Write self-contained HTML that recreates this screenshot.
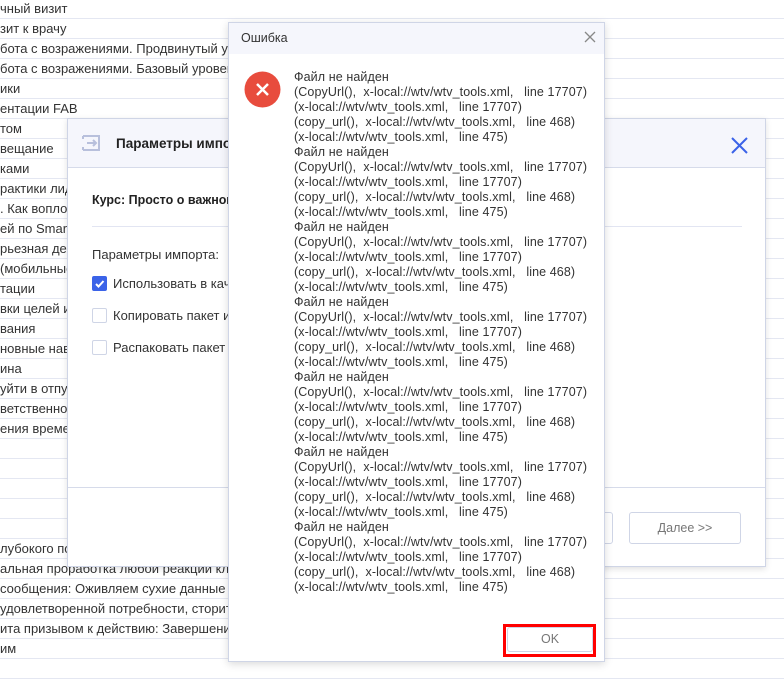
<!DOCTYPE html>
<html><head><meta charset="utf-8"><style>
*{box-sizing:border-box;margin:0;padding:0}
body{width:784px;height:678px;overflow:hidden;background:#fff;font-family:"Liberation Sans",sans-serif;color:#333;position:relative}
.row{position:absolute;left:0;width:784px;height:20px;border-bottom:1px solid #e4e7f2;font-size:13px;line-height:19px;padding-left:0;white-space:nowrap;overflow:hidden}
.imp{position:absolute;left:67px;top:118px;width:699px;height:449px;background:#fff;border:1px solid #cfd5e6;box-shadow:0 2px 6px rgba(0,0,0,.12)}
.imp .hd{height:49px;background:#f5f6fc;border-bottom:1px solid #d6dbea;position:relative}
.err{position:absolute;left:228px;top:22px;width:377px;height:640px;background:#fff;border:1px solid #cfd5e6;box-shadow:0 2px 8px rgba(0,0,0,.15)}
.err .hd{height:31px;background:#f5f6fc;font-size:12.5px;line-height:31px;padding-left:12px;color:#333}
.msg{position:absolute;left:65px;top:47px;font-size:12.5px;letter-spacing:0.1px;line-height:15px;color:#333;white-space:pre}
.cb{position:absolute;left:24px;width:15px;height:15px;border:1px solid #cfd5e6;border-radius:2px;background:#fff}
.lbl{position:absolute;left:45px;font-size:13px;color:#333;white-space:nowrap}
.btn{position:absolute;border:1px solid #cfd5e6;border-radius:3px;background:#fff;color:#777;font-size:12.5px;text-align:center}
</style></head><body>
<div class="row" style="top:-1px">чный визит</div>
<div class="row" style="top:19px">зит к врачу</div>
<div class="row" style="top:39px">бота с возражениями. Продвинутый уровень</div>
<div class="row" style="top:59px">бота с возражениями. Базовый уровень</div>
<div class="row" style="top:79px">ики</div>
<div class="row" style="top:99px">ентации FAB</div>
<div class="row" style="top:119px">том</div>
<div class="row" style="top:139px">вещание</div>
<div class="row" style="top:159px">ками</div>
<div class="row" style="top:179px">рактики лидеров</div>
<div class="row" style="top:199px">. Как воплотить</div>
<div class="row" style="top:219px">ей по Smart</div>
<div class="row" style="top:239px">рьезная деятельность</div>
<div class="row" style="top:259px"> (мобильные</div>
<div class="row" style="top:279px">тации</div>
<div class="row" style="top:299px">вки целей и</div>
<div class="row" style="top:319px">вания</div>
<div class="row" style="top:339px">новные навыки</div>
<div class="row" style="top:359px">ина</div>
<div class="row" style="top:379px">уйти в отпуск</div>
<div class="row" style="top:399px">ветственность</div>
<div class="row" style="top:419px">ения времени</div>
<div class="row" style="top:439px"></div>
<div class="row" style="top:459px"></div>
<div class="row" style="top:479px"></div>
<div class="row" style="top:499px"></div>
<div class="row" style="top:519px"></div>
<div class="row" style="top:539px">лубокого понимания</div>
<div class="row" style="top:559px">альная проработка любой реакции клиента</div>
<div class="row" style="top:579px"> сообщения: Оживляем сухие данные</div>
<div class="row" style="top:599px">удовлетворенной потребности, сторителлинг</div>
<div class="row" style="top:619px">ита призывом к действию: Завершение</div>
<div class="row" style="top:639px">им</div>
<div class="row" style="top:659px"></div>

<div class="imp">
 <div class="hd">
  <svg style="position:absolute;left:14px;top:16px" width="18" height="16" viewBox="0 0 18 16"><path d="M1 1h16v14H1M1 1v3M1 12v3M5 8h9M11 5l3 3-3 3" fill="none" stroke="#b8c0dc" stroke-width="2"/></svg>
  <div style="position:absolute;left:48px;top:17px;font-size:13.5px;font-weight:bold;color:#222">Параметры импорта</div>
  <svg style="position:absolute;left:663px;top:18px" width="17" height="17" viewBox="0 0 17 17"><path d="M1 1L16 16M16 1L1 16" stroke="#3b63e8" stroke-width="2"/></svg>
 </div>
 <div style="position:absolute;left:24px;top:74px;font-size:12.5px;font-weight:bold;color:#222">Курс: Просто о важном</div>
 <div style="position:absolute;left:24px;top:107px;width:650px;height:1px;background:#e2e5f2"></div>
 <div style="position:absolute;left:24px;top:128px;font-size:13px;color:#333">Параметры импорта:</div>
 <div class="cb" style="top:157px;background:#3b63e8;border-color:#3b63e8"><svg width="13" height="13" viewBox="0 0 13 13" style="position:absolute;left:0;top:0"><path d="M3 7l2.5 2.5L10.5 4" fill="none" stroke="#fff" stroke-width="2"/></svg></div>
 <div class="lbl" style="top:157px">Использовать в качестве</div>
 <div class="cb" style="top:189px"></div>
 <div class="lbl" style="top:189px">Копировать пакет из</div>
 <div class="cb" style="top:221px"></div>
 <div class="lbl" style="top:221px">Распаковать пакет</div>
 <div style="position:absolute;left:0;top:368px;width:697px;height:1px;background:#d6dbea"></div>
 <div class="btn" style="left:480px;top:393px;width:65px;height:32px"></div>
 <div class="btn" style="left:561px;top:393px;width:112px;height:32px;line-height:30px">Далее &gt;&gt;</div>
</div>

<div class="err">
 <div class="hd">Ошибка</div>
 <svg style="position:absolute;left:355px;top:8px" width="12" height="12" viewBox="0 0 12 12"><path d="M1 1L11 11M11 1L1 11" stroke="#888" stroke-width="1.3"/></svg>
 <svg style="position:absolute;left:15px;top:48px" width="37" height="37" viewBox="0 0 37 37"><circle cx="18.5" cy="18.5" r="18" fill="#e84c3d"/><path d="M13 13L24 24M24 13L13 24" stroke="#fff" stroke-width="2.5"/></svg>
 <div class="msg">Файл не найден
(CopyUrl(),  x-local://wtv/wtv_tools.xml,   line 17707)
(x-local://wtv/wtv_tools.xml,   line 17707)
(copy_url(),  x-local://wtv/wtv_tools.xml,   line 468)
(x-local://wtv/wtv_tools.xml,   line 475)
Файл не найден
(CopyUrl(),  x-local://wtv/wtv_tools.xml,   line 17707)
(x-local://wtv/wtv_tools.xml,   line 17707)
(copy_url(),  x-local://wtv/wtv_tools.xml,   line 468)
(x-local://wtv/wtv_tools.xml,   line 475)
Файл не найден
(CopyUrl(),  x-local://wtv/wtv_tools.xml,   line 17707)
(x-local://wtv/wtv_tools.xml,   line 17707)
(copy_url(),  x-local://wtv/wtv_tools.xml,   line 468)
(x-local://wtv/wtv_tools.xml,   line 475)
Файл не найден
(CopyUrl(),  x-local://wtv/wtv_tools.xml,   line 17707)
(x-local://wtv/wtv_tools.xml,   line 17707)
(copy_url(),  x-local://wtv/wtv_tools.xml,   line 468)
(x-local://wtv/wtv_tools.xml,   line 475)
Файл не найден
(CopyUrl(),  x-local://wtv/wtv_tools.xml,   line 17707)
(x-local://wtv/wtv_tools.xml,   line 17707)
(copy_url(),  x-local://wtv/wtv_tools.xml,   line 468)
(x-local://wtv/wtv_tools.xml,   line 475)
Файл не найден
(CopyUrl(),  x-local://wtv/wtv_tools.xml,   line 17707)
(x-local://wtv/wtv_tools.xml,   line 17707)
(copy_url(),  x-local://wtv/wtv_tools.xml,   line 468)
(x-local://wtv/wtv_tools.xml,   line 475)
Файл не найден
(CopyUrl(),  x-local://wtv/wtv_tools.xml,   line 17707)
(x-local://wtv/wtv_tools.xml,   line 17707)
(copy_url(),  x-local://wtv/wtv_tools.xml,   line 468)
(x-local://wtv/wtv_tools.xml,   line 475)</div>
 <div style="position:absolute;left:274px;top:601px;width:93px;height:33px;border:3px solid #f00"></div>
 <div class="btn" style="left:278px;top:604px;width:86px;height:25px;line-height:23px;color:#777">OK</div>
</div>
</body></html>
